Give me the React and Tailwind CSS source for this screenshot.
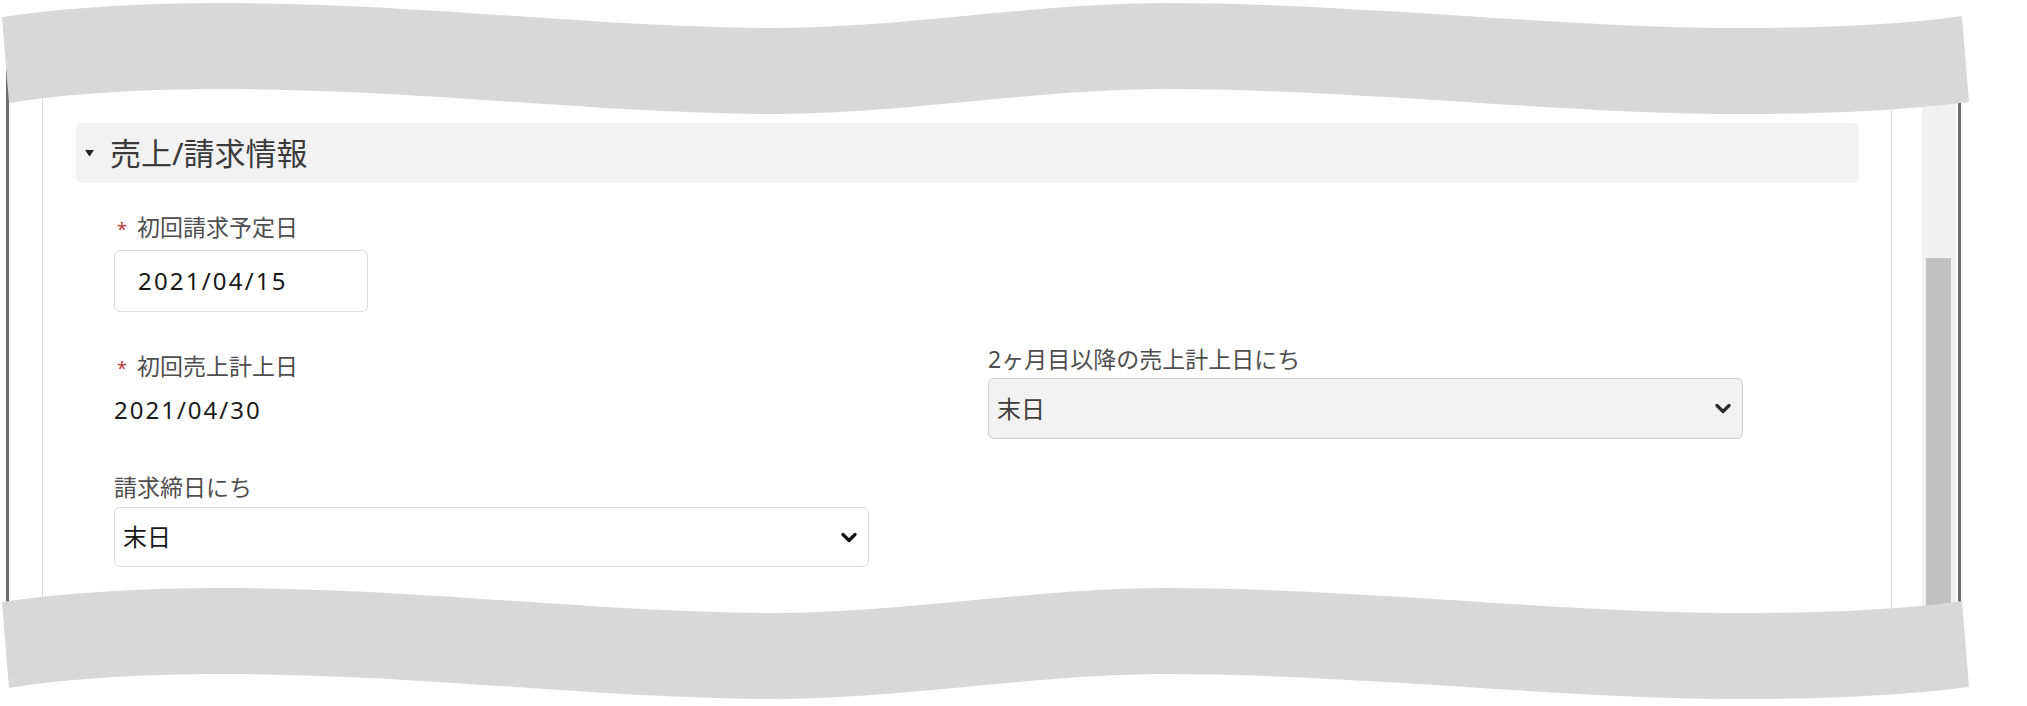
import React from 'react';

const BAND_PATH =
  'M2,17 C70,7 150,3 220,3 C420,3 600,28 776,28 C900,28 1040,3 1163,3 C1360,3 1560,28 1745,28 C1850,28 1920,22 1962,16 ' +
  'L1969,102 C1920,108 1850,114 1745,114 C1560,114 1360,89 1163,89 C1040,89 900,114 776,114 C600,114 420,89 220,89 C150,89 70,93 9,103 Z';

// torn-paper strip laid over the screenshot
const Band = ({ className }) => (
  <svg className={`absolute left-0 pointer-events-none ${className}`} width="2027" height="120" viewBox="0 0 2027 120">
    <path d={BAND_PATH} fill="#d8d8d8" />
  </svg>
);

const Chevron = ({ color }) => (
  <svg width="16" height="11" viewBox="0 0 16 11">
    <path d="M2 2.5 L8 8.5 L14 2.5" fill="none" stroke={color} strokeWidth="3.2" strokeLinecap="round" strokeLinejoin="round" />
  </svg>
);

const Label = ({ required, children }) => (
  <div className="flex items-baseline h-[30px] leading-[30px] text-[23px] text-[#4e4e4e] whitespace-nowrap">
    {required && <span className="ml-[3px] mr-[10px] text-[18px] text-[#c23934]">*</span>}
    <span>{children}</span>
  </div>
);

const Select = ({ value, disabled, className = '' }) => (
  <div
    className={`flex items-center justify-between w-[755px] pl-[8px] pr-[11px] rounded-[6px] border ${
      disabled ? 'bg-[#f3f2f2] border-[#d2d0ce] text-[#3e3e3c]' : 'bg-white border-[#dddbda] text-[#181818]'
    } ${className}`}
  >
    <span className="text-[24px] leading-none">{value}</span>
    <Chevron color={disabled ? '#2b2b2b' : '#111111'} />
  </div>
);

const App = () => {
  return (
    <div className="relative w-[2027px] h-[706px] overflow-hidden bg-white font-['Noto_Sans','Noto_Sans_CJK_JP',sans-serif]">
      <div className="ml-[6px] mt-[70px] h-[580px] w-[1955px] flex border-x-[3px] border-[#6e6e6e]">
        <div className="pl-[33px] flex">
          <div className="w-[1850px] h-full border-x border-[#dddbda] pl-[33px] pr-[32px] pt-[53px]">
            {/* section header */}
            <div className="flex items-center h-[60px] rounded-[6px] bg-[#f3f2f2] pl-[9px]">
              <svg width="9" height="7" viewBox="0 0 9 7" className="mr-[16px]">
                <polygon points="0,0 9,0 4.5,6.5" fill="#222222" />
              </svg>
              <span className="text-[31px] leading-none text-[#3a3a3a]">売上/請求情報</span>
            </div>

            <div className="ml-[38px]">
              <div className="mt-[29px]">
                <Label required>初回請求予定日</Label>
                <div className="mt-[8px] h-[62px] w-[254px] flex items-center pl-[23px] border border-[#dddbda] rounded-[6px] text-[24px] tracking-[2.2px] text-[#181818]">
                  2021/04/15
                </div>
              </div>

              <div className="grid grid-cols-[755px_755px] gap-x-[119px] mt-[32px]">
                <div className="pt-[7px]">
                  <Label required>初回売上計上日</Label>
                  <div className="mt-[13px] leading-[32px] text-[24px] tracking-[2px] text-[#1b1b1b]">2021/04/30</div>
                </div>
                <div>
                  <Label>2ヶ月目以降の売上計上日にち</Label>
                  <Select value="末日" disabled className="mt-[4px] h-[61px]" />
                </div>
              </div>

              <div className="mt-[33px]">
                <Label>請求締日にち</Label>
                <Select value="末日" className="mt-[5px] h-[60px]" />
              </div>
            </div>
          </div>

          {/* scrollbar */}
          <div className="ml-[30px] w-[34px] h-full flex flex-col bg-[#f1f1f1]">
            <div className="mt-[188px] ml-[4px] w-[25px] flex-1 bg-[#c1c1c1]" />
          </div>
        </div>
      </div>

      <Band className="top-0" />
      <Band className="top-[585px]" />
    </div>
  );
};

export default App;
